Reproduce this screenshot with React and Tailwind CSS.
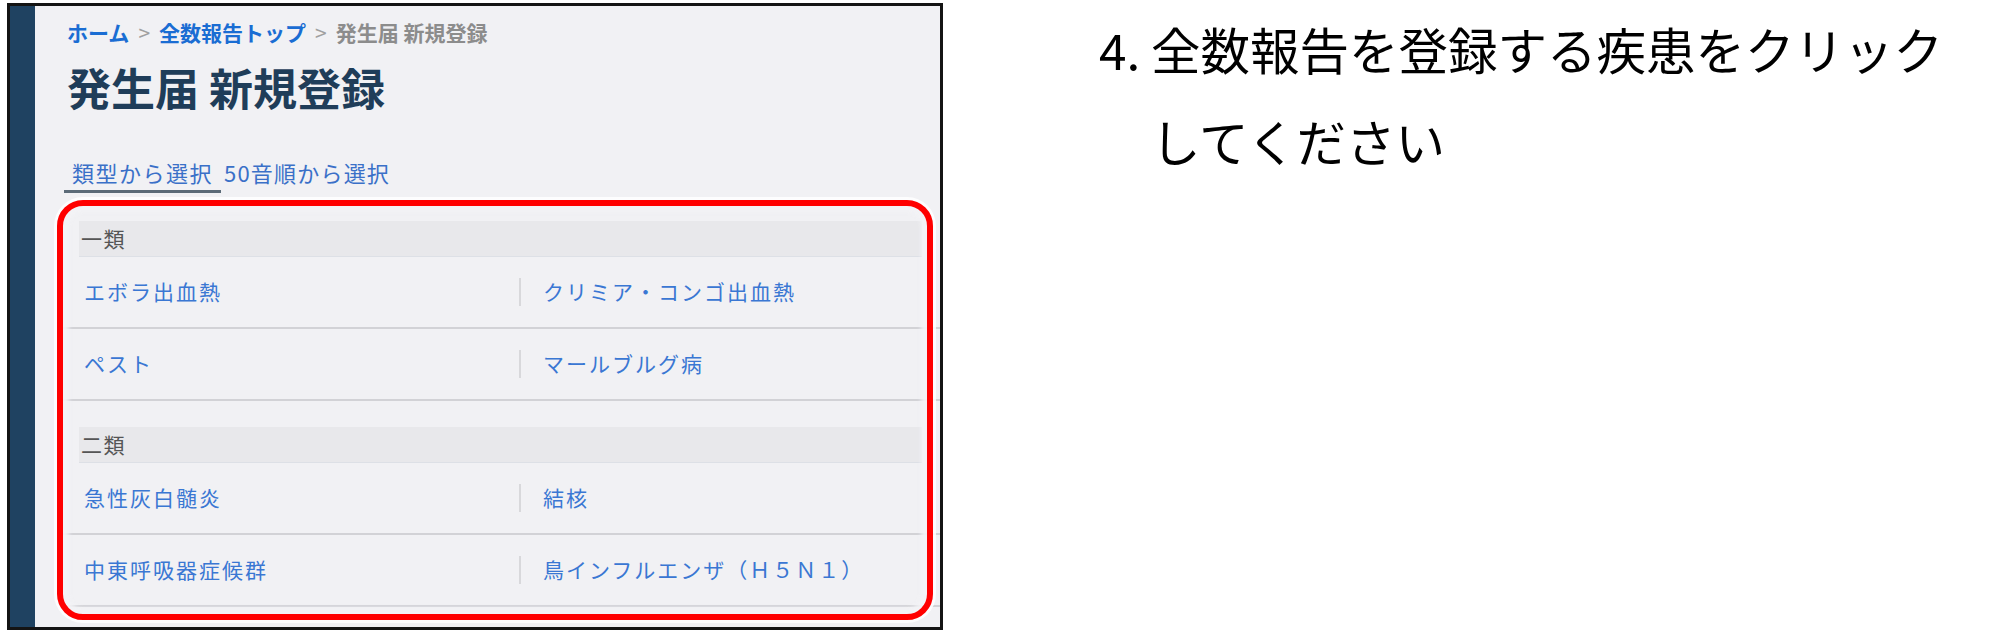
import React from "react";

const groups = [
  {
    name: "一類",
    rows: [
      ["エボラ出血熱", "クリミア・コンゴ出血熱"],
      ["ペスト", "マールブルグ病"],
    ],
  },
  {
    name: "二類",
    rows: [
      ["急性灰白髄炎", "結核"],
      ["中東呼吸器症候群", "鳥インフルエンザ（Ｈ５Ｎ１）"],
    ],
  },
];

function DiseaseRow({ left, right }) {
  return (
    <div className="h-[72px] flex items-center border-b-2 border-[#d2d2d6]">
      <div className="w-[456px] pl-[21px] text-[21px] tracking-[2px] text-[#3a77d3]">
        {left}
      </div>
      <div className="w-[2px] h-[28px] bg-[#d8d8db]" />
      <div className="pl-[22px] text-[21px] tracking-[2px] text-[#3a77d3]">
        {right}
      </div>
    </div>
  );
}

function Group({ name, rows, first }) {
  return (
    <div className={first ? "" : "mt-[26px]"}>
      <div className="ml-[16px] mr-[18px] h-[36px] flex items-center pl-[2px] bg-[#e8e8eb] border-b border-[#dde0e6] text-[21px] tracking-[1.5px] text-[#555]">
        {name}
      </div>
      {rows.map(([l, r]) => (
        <DiseaseRow key={l} left={l} right={r} />
      ))}
    </div>
  );
}

export default function App() {
  return (
    <div className="w-[2000px] h-[642px] bg-white flex items-start overflow-hidden font-['Noto_Sans_CJK_JP',sans-serif]">
      {/* captured page */}
      <div className="relative mt-[3px] ml-[7px] w-[936px] h-[627px] border-[3px] border-[#141414] flex shrink-0">
        <div className="w-[25px] bg-[#1f4261]" />
        <div className="flex-1 bg-[#f1f1f4] flex flex-col">
          <nav className="mt-[14px] ml-[32px] h-[24px] flex items-center text-[21px] font-bold leading-none">
            <span className="text-[#1a6dd3]">ホーム</span>
            <span className="mx-[9px] text-[#a0a0a0] font-normal">&gt;</span>
            <span className="text-[#1a6dd3]">全数報告トップ</span>
            <span className="mx-[9px] text-[#a0a0a0] font-normal">&gt;</span>
            <span className="text-[#8c8c8c]">発生届 新規登録</span>
          </nav>
          <h1 className="mt-[18px] ml-[32px] h-[56px] leading-[50px] text-[44px] font-bold text-[#1f3d59]">
            発生届 新規登録
          </h1>
          <div className="mt-[38px] ml-[29px] flex">
            <div className="h-[37px] px-[8px] border-b-[3px] border-[#5c6b78] text-[22px] leading-[32px] tracking-[1.5px] text-[#3a70c8]">
              類型から選択
            </div>
            <div className="h-[37px] pl-[3px] text-[22px] leading-[32px] tracking-[1.2px] text-[#3a70c8]">
              50音順から選択
            </div>
          </div>
          <div className="mt-[28px] ml-[28px]">
            {groups.map((g, i) => (
              <Group key={g.name} name={g.name} rows={g.rows} first={i === 0} />
            ))}
          </div>
        </div>
        {/* highlight around the disease list */}
        <div className="absolute left-[47px] top-[194px] w-[876px] h-[420px] rounded-[26px] border-[6px] border-[#ff0000] shadow-[0_0_0_3px_rgba(255,255,255,0.85),inset_0_0_4px_6px_rgba(242,242,245,0.95)] pointer-events-none" />
      </div>

      {/* instruction */}
      <div className="ml-[156px] mt-[3px] flex text-[49.5px] leading-[92px] text-black">
        <span className="w-[52px] shrink-0">4.</span>
        <div>
          <div className="whitespace-nowrap">全数報告を登録する疾患をクリック</div>
          <div>してください</div>
        </div>
      </div>
    </div>
  );
}
